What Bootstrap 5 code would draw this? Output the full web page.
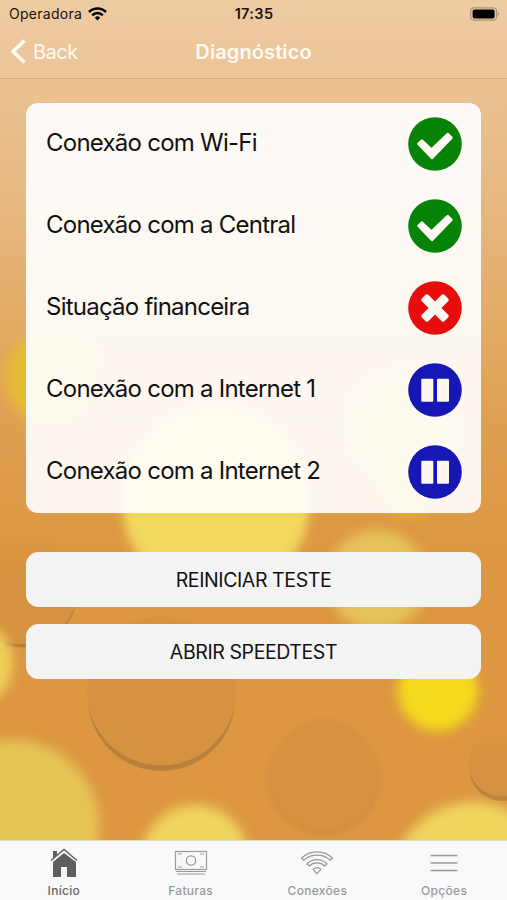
<!DOCTYPE html>
<html lang="pt-BR">
<head>
<meta charset="utf-8">
<meta name="viewport" content="width=device-width, initial-scale=1">
<title>Diagnóstico</title>
<link href="https://cdn.jsdelivr.net/npm/bootstrap@5.3.0/dist/css/bootstrap.min.css" rel="stylesheet">
<style>
  body { font-family: Inter, "Liberation Sans", sans-serif; color: #111; background: #de9741; }
  .screen { height: 900px; isolation: isolate; }
  .bubbles { z-index: -1; }
  .status-bar { height: 27px; padding: 0 8px 0 9px; font-size: 14px; color: #1c140c; }
  .carrier { letter-spacing: .28px; }
  .signal { gap: 6px; }
  .clock { font-size: 14.5px; font-weight: 600; letter-spacing: .35px; }
  .title-bar { height: 52px; padding: 0 10px; border-bottom: 1px solid #d5ad82; color: #fffaf2; }
  .back-link { gap: 7px; font-size: 20px; letter-spacing: -.5px; color: #fffaf2; padding-top: 2px; }
  .page-title { font-size: 20px; font-weight: 600; letter-spacing: .1px; padding-bottom: 1px; }
  .content-area { padding: 24px 26px 0; }
  .checks { --bs-list-group-bg: transparent; --bs-list-group-color: #111; background: rgba(255,255,255,.91); border-radius: 12px; height: 410px; }
  .check-row { height: 82px; padding: 0 19.5px 1px 20px; font-size: 24px; letter-spacing: -.76px; }
  .check-row span { padding-bottom: 1px; }
  .actions { margin-top: 39px; gap: 17px; }
  .action-btn { --bs-btn-bg: #f4f4f4; --bs-btn-color: #111; --bs-btn-border-color: #f4f4f4; --bs-btn-hover-bg: #e9e9e9; height: 55px; border-radius: 12px; font-size: 19.5px; letter-spacing: -.4px; padding-top: 8px; }
  .tab-bar { height: 60px; background: #f9f9f9; border-top: 1px solid #e3d9c9; }
  .tab-link { --bs-nav-link-color: #999; padding: 7px 0 0 1px; font-size: 12px; font-weight: 500; letter-spacing: .3px; line-height: 18px; color: #999; }
  .tab-link.active { color: #666; }
  .tab-link svg { margin-bottom: 4px; }
</style>
</head>
<body>
<div class="screen position-relative d-flex flex-column overflow-hidden">
  <svg class="bubbles position-absolute top-0 start-0 w-100 h-100" viewBox="0 0 507 900" aria-hidden="true">
    <defs>
      <linearGradient id="sky" x1="0" y1="0" x2="0" y2="1">
        <stop offset="0" stop-color="#edcba2"/>
        <stop offset=".11" stop-color="#eac190"/>
        <stop offset=".22" stop-color="#e7b982"/>
        <stop offset=".36" stop-color="#e3ab65"/>
        <stop offset=".48" stop-color="#df9f51"/>
        <stop offset=".62" stop-color="#dd9741"/>
        <stop offset="1" stop-color="#dd9741"/>
      </linearGradient>
      <linearGradient id="rim" x1="0" y1="0" x2="0" y2="1">
        <stop offset=".45" stop-color="#b9803d" stop-opacity="0"/>
        <stop offset=".7" stop-color="#b9803d"/>
      </linearGradient>
      <linearGradient id="disc" x1="0" y1="0" x2="0" y2="1">
        <stop offset="0" stop-color="#d59240" stop-opacity="0"/>
        <stop offset=".4" stop-color="#d59240"/>
      </linearGradient>
      <filter id="soft" x="-30%" y="-30%" width="160%" height="160%"><feGaussianBlur stdDeviation="5.500"/></filter>
      <filter id="faint" x="-30%" y="-30%" width="160%" height="160%"><feGaussianBlur stdDeviation="2.500"/></filter>
    </defs>
    <rect width="507" height="900" fill="url(#sky)"/>
    <circle cx="22" cy="592" r="55.500" fill="url(#rim)"/>
    <circle cx="22" cy="588" r="56" fill="url(#disc)"/>
    <circle cx="161.500" cy="697" r="74" fill="url(#rim)"/>
    <circle cx="161.500" cy="691" r="74.500" fill="#d59240"/>
    <circle cx="502" cy="768" r="33" fill="url(#rim)"/>
    <circle cx="502" cy="763" r="33.500" fill="url(#disc)"/>
    <g filter="url(#faint)">
      <circle cx="324" cy="779" r="57" fill="#d08f3f"/>
      <circle cx="324" cy="774" r="55" fill="#d59240"/>
    </g>
    <g filter="url(#soft)">
      <circle cx="52" cy="378" r="47" fill="#e6bc36"/>
      <circle cx="216" cy="502" r="94" fill="#f2d85f"/>
      <circle cx="404" cy="430" r="58" fill="#e5c45c"/>
      <circle cx="409" cy="476" r="39" fill="#e5b832"/>
      <circle cx="377" cy="580" r="50" fill="#e5c25a"/>
      <circle cx="-32" cy="663" r="45" fill="#efd05a"/>
      <circle cx="438" cy="691" r="40" fill="#f4d91e"/>
      <circle cx="13" cy="826" r="86" fill="#e5c457"/>
      <circle cx="195" cy="858" r="53" fill="#efd45d"/>
      <circle cx="473" cy="883" r="81" fill="#efd45d"/>
    </g>
    <rect y="0" width="507" height="79" fill="#edcba2" fill-opacity=".3"/>
  </svg>

  <header>
    <div class="status-bar row g-0 align-items-center">
      <div class="col signal d-flex align-items-center">
        <span class="carrier">Operadora</span>
        <svg width="19" height="14" viewBox="0 0 19 14" fill="none" stroke="#000" stroke-width="2.500" aria-hidden="true">
          <path d="M1 5a12 12 0 0 1 17 0M4.200 8.300a7.500 7.500 0 0 1 10.600 0"/>
          <path d="M9.500 13.500 6.800 10.700a3.800 3.800 0 0 1 5.400 0z" fill="#000" stroke="none"/>
        </svg>
      </div>
      <div class="col-auto clock">17:35</div>
      <div class="col d-flex justify-content-end">
        <svg width="31" height="14" viewBox="0 0 31 14" aria-hidden="true">
          <rect x="2.600" y=".8" width="26" height="12.400" rx="3.600" fill="none" stroke="#aa9275" stroke-width="1.200"/>
          <rect x="4.600" y="2.600" width="22" height="8.800" rx="2" fill="#000"/>
          <path d="M29.800 4.800c1.600 1 1.600 3.400 0 4.400z" fill="#aa9275"/>
        </svg>
      </div>
    </div>
    <nav class="title-bar row g-0 align-items-center">
      <div class="col">
        <a href="#" class="back-link d-inline-flex align-items-center text-decoration-none">
          <svg width="16" height="25" viewBox="0 0 16 25" fill="none" stroke="#fffaf2" stroke-width="3.600" aria-hidden="true"><path d="M14.500 1.500 3.200 12.500 14.500 23.500"/></svg>
          <span>Back</span>
        </a>
      </div>
      <h1 class="col-auto page-title mb-0">Diagnóstico</h1>
      <div class="col"></div>
    </nav>
  </header>

  <svg class="d-none" aria-hidden="true">
    <symbol id="ok" viewBox="0 0 54 54"><circle cx="27" cy="27" r="26.800" fill="#078407"/><path d="M10.600 26.700 13.900 23.700 23.500 32.700 39.700 17.200 43.300 20.700 24 40.800z" fill="#fffaf3" stroke="#fffaf3" stroke-width="2.800" stroke-linejoin="round"/></symbol>
    <symbol id="fail" viewBox="0 0 54 54"><circle cx="27" cy="27" r="26.800" fill="#e90c0c"/><g fill="#fff7f2"><rect x="11" y="22.400" width="32" height="9.200" rx="2" transform="rotate(45 27 27)"/><rect x="11" y="22.400" width="32" height="9.200" rx="2" transform="rotate(-45 27 27)"/></g></symbol>
    <symbol id="wait" viewBox="0 0 54 54"><circle cx="27" cy="27" r="26.800" fill="#1717b5"/><g fill="#fdf8ef"><rect x="13.300" y="15.800" width="12" height="23" rx="1"/><rect x="29" y="15.800" width="12" height="23" rx="1"/></g></symbol>
  </svg>

  <main class="content-area flex-grow-1">
    <ul class="checks list-group list-group-flush">
      <li class="check-row list-group-item border-0 d-flex align-items-center justify-content-between"><span>Conexão com Wi-Fi</span><svg width="54" height="54"><use href="#ok"/></svg></li>
      <li class="check-row list-group-item border-0 d-flex align-items-center justify-content-between"><span>Conexão com a Central</span><svg width="54" height="54"><use href="#ok"/></svg></li>
      <li class="check-row list-group-item border-0 d-flex align-items-center justify-content-between"><span>Situação financeira</span><svg width="54" height="54"><use href="#fail"/></svg></li>
      <li class="check-row list-group-item border-0 d-flex align-items-center justify-content-between"><span>Conexão com a Internet 1</span><svg width="54" height="54"><use href="#wait"/></svg></li>
      <li class="check-row list-group-item border-0 d-flex align-items-center justify-content-between"><span>Conexão com a Internet 2</span><svg width="54" height="54"><use href="#wait"/></svg></li>
    </ul>
    <div class="actions d-grid">
      <button type="button" class="btn action-btn">REINICIAR TESTE</button>
      <button type="button" class="btn action-btn">ABRIR SPEEDTEST</button>
    </div>
  </main>

  <nav class="tab-bar nav nav-fill flex-nowrap">
    <a href="#" class="nav-item nav-link tab-link active d-flex flex-column align-items-center col-3">
      <svg width="28" height="30" viewBox="0 0 28 30" aria-hidden="true">
        <path d="M3 3h4v4L3 10.500zM14 5 3 14v15h8V19h6v10h9V14z" fill="#5e5e5e"/>
        <path d="M1 12.500 14 1.500 27 12.500" fill="none" stroke="#5e5e5e" stroke-width="1.400"/>
      </svg>
      Início
    </a>
    <a href="#" class="nav-item nav-link tab-link d-flex flex-column align-items-center col-3">
      <svg width="34" height="30" viewBox="0 0 34 30" fill="none" stroke="#999" stroke-width="1.200" aria-hidden="true">
        <rect x="1.500" y="3.500" width="31" height="18"/>
        <circle cx="17" cy="12.500" r="4.700"/>
        <path d="M4 6h4M26 6h4M4 19h4M26 19h4M2 23.500h30M3 26h28"/>
      </svg>
      Faturas
    </a>
    <a href="#" class="nav-item nav-link tab-link d-flex flex-column align-items-center col-3">
      <svg width="34" height="30" viewBox="0 0 34 30" fill="none" stroke="#999" stroke-width="1.200" stroke-linejoin="round" aria-hidden="true">
        <path d="M1.500 10.200C10 1.800 24 1.800 32.500 10.200L30.200 12.200C23 5.400 11 5.400 3.800 12.200z"/>
        <path d="M7 16C12.500 10.200 21.500 10.200 27 16L24.700 18C20.500 13.800 13.500 13.800 9.300 18z"/>
        <path d="M13 21.300c2-2.300 6-2.300 8 0L17 25.700z"/>
      </svg>
      Conexões
    </a>
    <a href="#" class="nav-item nav-link tab-link d-flex flex-column align-items-center col-3">
      <svg width="30" height="30" viewBox="0 0 30 30" stroke="#999" stroke-width="1.500" aria-hidden="true"><path d="M1.500 7.500h27M1.500 15h27M1.500 22.500h27"/></svg>
      Opções
    </a>
  </nav>
</div>
<script src="https://cdn.jsdelivr.net/npm/bootstrap@5.3.0/dist/js/bootstrap.bundle.min.js"></script>
</body>
</html>
